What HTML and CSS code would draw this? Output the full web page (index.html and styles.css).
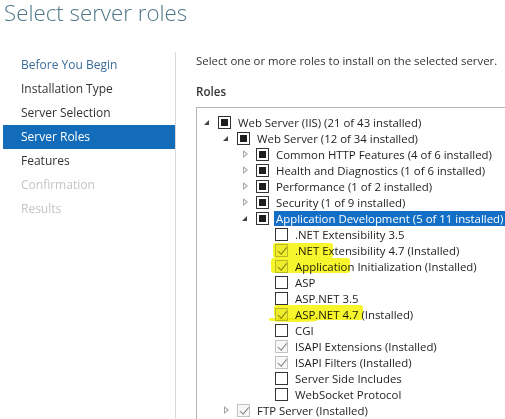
FILE: index.html
```html
<!DOCTYPE html>
<html>
<head>
<meta charset="utf-8">
<link rel="stylesheet" href="styles.css">
</head>
<body>
<div class="page">
  <header class="head"><h1 class="title">Select server roles</h1></header>
  <div class="main">
    <nav class="nav">
      <div class="nav-item link">Before You Begin</div>
      <div class="nav-item">Installation Type</div>
      <div class="nav-item">Server Selection</div>
      <div class="nav-item active">Server Roles</div>
      <div class="nav-item">Features</div>
      <div class="nav-item off">Confirmation</div>
      <div class="nav-item off">Results</div>
    </nav>
    <section class="content">
      <p class="intro">Select one or more roles to install on the selected server.</p>
      <h2 class="label">Roles</h2>
      <div class="tree">
        <div class="row l1"><span class="exp open"></span><span class="cb partial"></span><span class="txt">Web Server (IIS) (21 of 43 installed)</span></div>
        <div class="row l2"><span class="exp open"></span><span class="cb partial"></span><span class="txt">Web Server (12 of 34 installed)</span></div>
        <div class="row l3"><span class="exp closed"></span><span class="cb partial"></span><span class="txt">Common HTTP Features (4 of 6 installed)</span></div>
        <div class="row l3"><span class="exp closed"></span><span class="cb partial"></span><span class="txt">Health and Diagnostics (1 of 6 installed)</span></div>
        <div class="row l3"><span class="exp closed"></span><span class="cb partial"></span><span class="txt">Performance (1 of 2 installed)</span></div>
        <div class="row l3"><span class="exp closed"></span><span class="cb partial"></span><span class="txt">Security (1 of 9 installed)</span></div>
        <div class="row l3"><span class="exp open"></span><span class="cb partial"></span><span class="txt sel">Application Development (5 of 11 installed)</span></div>
        <div class="row l4"><span class="exp none"></span><span class="cb"></span><span class="txt">.NET Extensibility 3.5</span></div>
        <div class="row l4"><span class="hl hl1"></span><span class="exp none"></span><span class="cb done"></span><span class="txt">.NET Extensibility 4.7 (Installed)</span></div>
        <div class="row l4"><span class="hl hl2"></span><span class="exp none"></span><span class="cb done"></span><span class="txt">Application Initialization (Installed)</span></div>
        <div class="row l4"><span class="exp none"></span><span class="cb"></span><span class="txt">ASP</span></div>
        <div class="row l4"><span class="exp none"></span><span class="cb"></span><span class="txt">ASP.NET 3.5</span></div>
        <div class="row l4"><span class="hl hl3"></span><span class="hl hl4"></span><span class="exp none"></span><span class="cb done"></span><span class="txt">ASP.NET 4.7 (Installed)</span></div>
        <div class="row l4"><span class="exp none"></span><span class="cb"></span><span class="txt">CGI</span></div>
        <div class="row l4"><span class="exp none"></span><span class="cb done"></span><span class="txt">ISAPI Extensions (Installed)</span></div>
        <div class="row l4"><span class="exp none"></span><span class="cb done"></span><span class="txt">ISAPI Filters (Installed)</span></div>
        <div class="row l4"><span class="exp none"></span><span class="cb"></span><span class="txt">Server Side Includes</span></div>
        <div class="row l4"><span class="exp none"></span><span class="cb"></span><span class="txt">WebSocket Protocol</span></div>
        <div class="row l2"><span class="exp closed"></span><span class="cb done"></span><span class="txt">FTP Server (Installed)</span></div>
      </div>
    </section>
  </div>
</div>
</body>
</html>
```
FILE: styles.css
```css
html, body {
  margin: 0;
  padding: 0;
  background: #ffffff;
  overflow: hidden;
}
body {
  font-family: "Open Sans", "Noto Sans", "Liberation Sans", sans-serif;
  font-size: 11.4px;
  color: #1e1e1e;
}
.page {
  width: 505px;
  height: 419px;
  overflow: hidden;
}
.head {
  height: 52px;
}
.title {
  margin: 0;
  padding-left: 4px;
  font-size: 22.3px;
  font-weight: 300;
  line-height: 26px;
  color: #4f7787;
  white-space: nowrap;
}
.main {
  display: flex;
  height: 367px;
}
.nav {
  width: 175px;
  border-right: 1px solid #d9d9d9;
  padding-top: 1px;
  flex: none;
}
.nav-item {
  height: 24px;
  line-height: 24px;
  margin-left: 3px;
  padding-left: 18px;
  font-size: 12px;
  color: #333333;
}
.nav-item.link { color: #3b6b9a; }
.nav-item.active {
  background: #136cb9;
  color: #ffffff;
}
.nav-item.off { color: #c4c4c4; }
.content {
  flex: 1;
  padding-left: 20px;
  padding-top: 1px;
  min-width: 0;
}
.intro {
  margin: 0;
  line-height: 16px;
  color: #333333;
  white-space: nowrap;
}
.label {
  margin: 15px 0 0 0;
  font-size: 11.6px;
  font-weight: 600;
  line-height: 16px;
  color: #333333;
}
.tree {
  margin-top: 7px;
  border-top: 1px solid #b4b4b4;
  border-left: 1px solid #b4b4b4;
  padding-top: 6px;
  height: 400px;
}
.row {
  position: relative;
  display: flex;
  align-items: center;
  height: 16px;
  white-space: nowrap;
}
.l1 { padding-left: 5px; }
.l2 { padding-left: 24px; }
.l3 { padding-left: 43px; }
.l4 { padding-left: 62px; }
.exp {
  position: relative;
  z-index: 1;
  width: 16px;
  height: 16px;
  flex: none;
}
.exp.open::before {
  content: "";
  position: absolute;
  left: 2px;
  top: 6px;
  width: 0;
  height: 0;
  border-left: 5px solid transparent;
  border-bottom: 5px solid #444444;
}
.exp.closed::before {
  content: "";
  position: absolute;
  left: 3px;
  top: 4px;
  width: 0;
  height: 0;
  border-top: 4px solid transparent;
  border-bottom: 4px solid transparent;
  border-left: 5px solid #a6a6a6;
}
.exp.closed::after {
  content: "";
  position: absolute;
  left: 4px;
  top: 6px;
  width: 0;
  height: 0;
  border-top: 2px solid transparent;
  border-bottom: 2px solid transparent;
  border-left: 2.5px solid #ffffff;
}
.cb {
  position: relative;
  z-index: 1;
  box-sizing: border-box;
  width: 13px;
  height: 13px;
  border: 1px solid #333333;
  background: #ffffff;
  flex: none;
}
.cb.partial::before {
  content: "";
  position: absolute;
  left: 2px;
  top: 2px;
  width: 7px;
  height: 7px;
  background: #1e1e1e;
}
.cb.done {
  border-color: #c2c2c2;
  background: #f7f7f7;
}
.cb.done::before {
  content: "";
  position: absolute;
  left: 3.5px;
  top: 0px;
  width: 3.5px;
  height: 7.5px;
  border-right: 1.8px solid #858585;
  border-bottom: 1.8px solid #858585;
  transform: rotate(40deg);
}
.txt {
  position: relative;
  z-index: 1;
  margin-left: 7px;
  line-height: 15px;
}
.txt.sel {
  background: #136fc6;
  color: #ffffff;
  padding: 0 2px;
  margin-left: 5px;
}
.hl {
  position: absolute;
  z-index: 2;
  background: #f7f52c;
  mix-blend-mode: multiply;
  border-radius: 3px;
}
.hl1 { left: 76px; top: 1px; width: 60px; height: 15px; }
.hl2 { left: 74px; top: 0px; width: 79px; height: 15px; }
.hl3 { left: 77px; top: -1px; width: 89px; height: 15px; border-radius: 3px 3px 3px 6px; }
.hl4 { left: 72px; top: 12px; width: 48px; height: 4px; border-radius: 0 0 40% 50%; }
```
